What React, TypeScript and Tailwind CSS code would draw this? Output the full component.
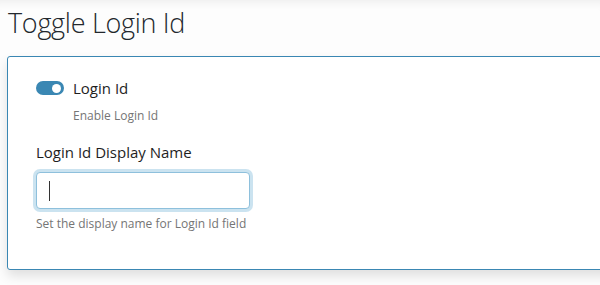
export default function App() {
    return (
        <div className="w-full h-[285px] bg-[#fdfdfd] overflow-hidden shadow-[inset_0_10px_10px_-8px_rgba(0,0,0,0.07)] font-['Open_Sans',sans-serif]">
            <h1 className="pl-[8px] pt-[5px] text-[27px] leading-[36px] font-light text-[#23282d] tracking-[-0.3px]">
                Toggle Login Id
            </h1>
            <div className="ml-[7px] mt-[15px] w-[620px] h-[214px] bg-white border border-[#3a87b3] rounded-[3px] shadow-[0_6px_12px_rgba(0,0,0,0.12)] pl-[28px] pt-[21px]">
                <label className="flex items-center gap-[9px]">
                    <span className="relative w-[28px] h-[14px] rounded-full bg-[#3a87b3] flex items-center">
                        <span className="absolute right-[3px] w-[9px] h-[9px] rounded-full bg-white" />
                    </span>
                    <span className="text-[15px] leading-[20px] text-[#1e1e1e]">Login Id</span>
                </label>
                <p className="ml-[37px] mt-[10px] text-[12px] leading-[16px] text-[#757575]">Enable Login Id</p>
                <p className="mt-[18px] text-[15px] leading-[20px] text-[#1e1e1e]">Login Id Display Name</p>
                <div className="mt-[10px] w-[214px] h-[37px] rounded-[4px] border border-[#8ec0dc] bg-white shadow-[0_0_0_3px_rgba(160,204,228,0.55)] flex items-center pl-[12px]">
                    <span className="w-px h-[20px] bg-[#333]" />
                </div>
                <p className="mt-[7px] text-[12px] leading-[16px] text-[#757575]">Set the display name for Login Id field</p>
            </div>
        </div>
    );
}
